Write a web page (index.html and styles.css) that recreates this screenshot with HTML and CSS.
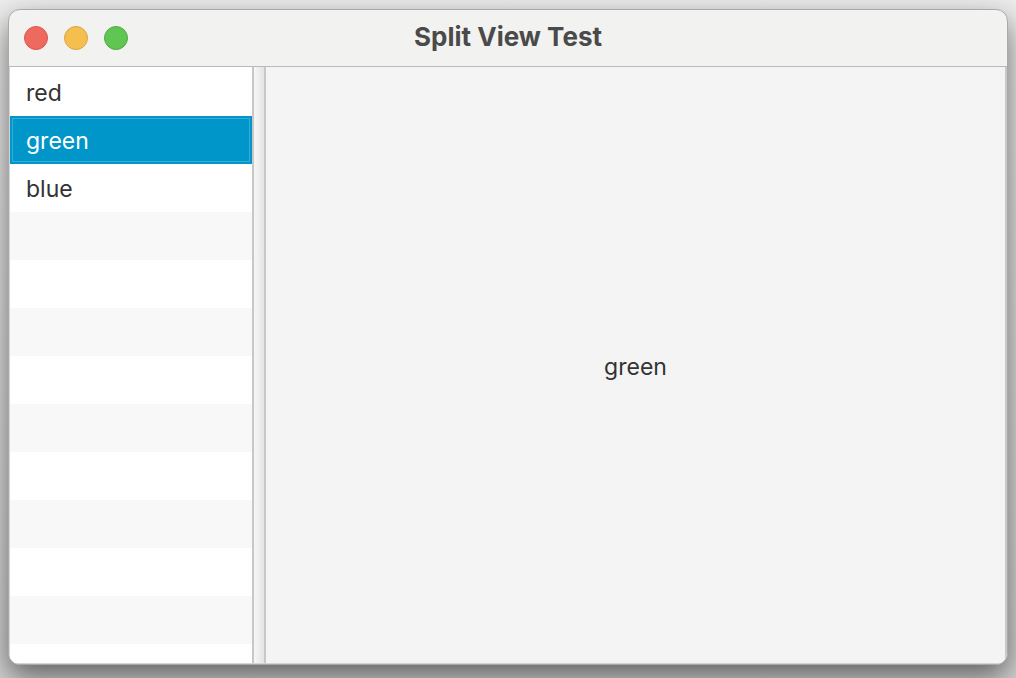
FILE: index.html
```html
<!DOCTYPE html>
<html>
<head>
<meta charset="utf-8">
<link rel="stylesheet" href="styles.css">
</head>
<body>
<div class="window">
  <div class="titlebar">
    <div class="lights">
      <span class="light red"></span>
      <span class="light yellow"></span>
      <span class="light green"></span>
    </div>
    <div class="title">Split View Test</div>
    <div></div>
  </div>
  <div class="content">
    <div class="list">
      <div class="row">red</div>
      <div class="row selected">green</div>
      <div class="row">blue</div>
      <div class="row"></div>
      <div class="row"></div>
      <div class="row"></div>
      <div class="row"></div>
      <div class="row"></div>
      <div class="row"></div>
      <div class="row"></div>
      <div class="row"></div>
      <div class="row"></div>
      <div class="row"></div>
    </div>
    <div class="divider"></div>
    <div class="detail">green</div>
  </div>
</div>
</body>
</html>
```
FILE: styles.css
```css
html, body {
  margin: 0;
  padding: 0;
}
body {
  width: 1016px;
  height: 678px;
  overflow: hidden;
  background: linear-gradient(#ededed, #d4d4d4);
  font-family: Inter, "Liberation Sans", sans-serif;
}
.window {
  margin: 9px 0 0 8px;
  width: 1000px;
  height: 656px;
  box-sizing: border-box;
  border: 1px solid #a9a9a9;
  border-radius: 12px;
  overflow: hidden;
  background: #f2f2f1;
  display: flex;
  flex-direction: column;
  box-shadow: 0 12px 30px rgba(0, 0, 0, 0.55);
}
.titlebar {
  height: 56px;
  flex: none;
  border-bottom: 1px solid #b9b9b9;
  display: grid;
  grid-template-columns: 1fr auto 1fr;
  align-items: center;
}
.lights {
  display: flex;
  gap: 16px;
  padding-left: 15px;
}
.light {
  width: 24px;
  height: 24px;
  border-radius: 50%;
  box-sizing: border-box;
}
.red { background: #ee6a5f; border: 1px solid #dd554b; }
.yellow { background: #f5bf4f; border: 1px solid #dba542; }
.green { background: #61c554; border: 1px solid #50aa40; }
.title {
  font-weight: 700;
  font-size: 26px;
  line-height: 30px;
  color: #4a4a4a;
  margin-top: -2px;
}
.content {
  flex: 1;
  display: flex;
  min-height: 0;
  padding: 0 0 1px 1px;
  background: #d4d4d4;
}
.list {
  width: 242px;
  flex: none;
  background: #ffffff;
  overflow: hidden;
  padding-top: 1px;
}
.row {
  height: 48px;
  box-sizing: border-box;
  padding: 1px 0 0 16px;
  display: flex;
  align-items: center;
  font-size: 23px;
  color: #333333;
  background: #ffffff;
}
.row:nth-child(even) {
  background: #f8f8f8;
}
.row.selected {
  background: #0096c9;
  color: #ffffff;
  box-shadow: inset 0 0 0 2px #0096c9, inset 0 0 0 3px #3aaad6;
}
.divider {
  width: 10px;
  flex: none;
  border-left: 2px solid #c8c8c8;
  border-right: 2px solid #c8c8c8;
  background: linear-gradient(to right, #f6f6f6, #e4e4e4);
}
.detail {
  flex: 1;
  background: #f4f4f4;
  border-right: 2px solid #c8c8c8;
  display: flex;
  align-items: center;
  justify-content: center;
  padding-top: 3px;
  font-size: 23px;
  color: #333333;
}
```
